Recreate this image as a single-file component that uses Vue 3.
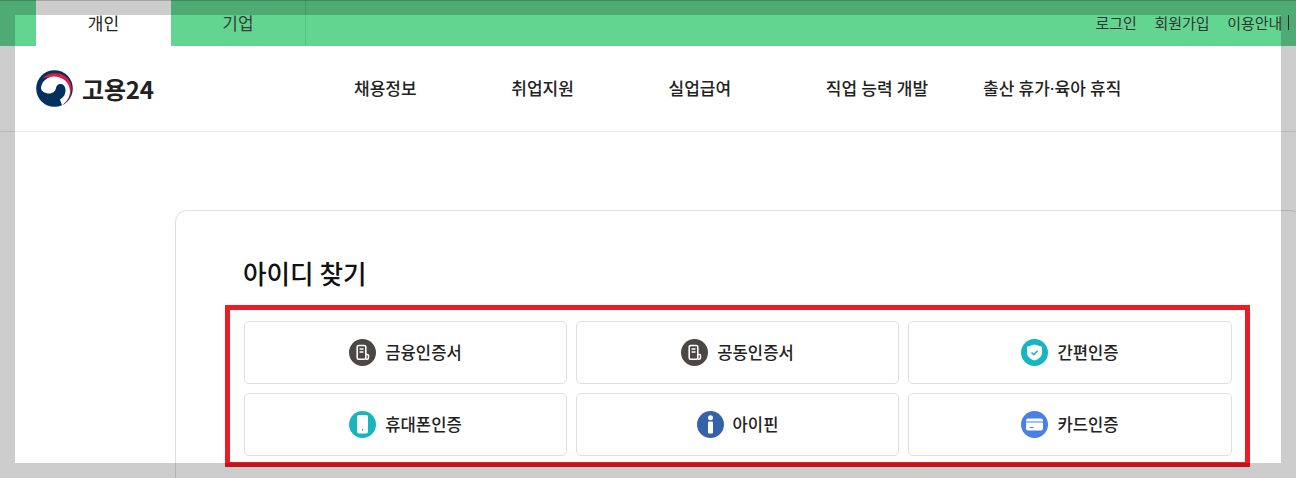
<script setup>
const topLinks = ['로그인', '회원가입', '이용안내']
const navItems = ['채용정보', '취업지원', '실업급여', '직업 능력 개발', '출산 휴가·육아 휴직']
const methods = [
  { label: '금융인증서', icon: 'cert' },
  { label: '공동인증서', icon: 'cert' },
  { label: '간편인증', icon: 'shield' },
  { label: '휴대폰인증', icon: 'phone' },
  { label: '아이핀', icon: 'info' },
  { label: '카드인증', icon: 'card' },
]
</script>

<template>
  <div class="page">
    <div class="topbar">
      <div class="tabs">
        <span class="tab active">개인</span>
        <span class="tab">기업</span>
      </div>
      <div class="links">
        <span v-for="l in topLinks" :key="l">{{ l }}</span>
        <span class="sep"></span>
      </div>
    </div>

    <header class="header">
      <div class="logo">
        <svg width="38" height="37" viewBox="0 0 38 37">
          <circle cx="18.500" cy="18.500" r="18.300" fill="#02305f" />
          <path d="M6.500 8.500C12 2.500 24 1 31 8C37.500 14.500 38 26 27 35.500C33 29 35 20 30 13C25 6.500 14 5.500 6.500 8.500Z" fill="#e8173f" />
          <path d="M5 18C5.500 11 12 6.500 18 6.500C27 6.500 34 13 34 21.500C34 27 30.500 32 26 35.500L24 29.500C28 27 29.500 24 29.500 20.500C29.500 16.500 27.500 14 24.500 14C22 14 20.500 15.500 20 18C19.500 21 17 23.500 13 23.500C9 23.500 5 21 5 18Z" fill="#fff" />
        </svg>
        <span class="logo-text">고용24</span>
      </div>
      <nav class="nav">
        <span v-for="n in navItems" :key="n">{{ n }}</span>
      </nav>
    </header>

    <section class="card">
      <h1 class="title">아이디 찾기</h1>
      <div class="grid">
        <button v-for="m in methods" :key="m.label" class="method">
          <svg class="icon" width="27" height="27" viewBox="0 0 27 27">
            <template v-if="m.icon === 'cert'">
              <circle cx="13.500" cy="13.500" r="13.500" fill="#4b4745" />
              <rect x="8.200" y="6.500" width="8.600" height="13.800" rx="1.500" fill="none" stroke="#fff" stroke-width="1.600" />
              <path d="M10.500 9.900h4M10.500 12.900h4" stroke="#fff" stroke-width="1.500" />
              <path d="M17 15.500h1.500a1 1 0 0 1 1 1v2.200a1.500 1.500 0 0 1-1.500 1.500h-1" fill="none" stroke="#fff" stroke-width="1.500" />
            </template>
            <template v-else-if="m.icon === 'shield'">
              <circle cx="13.500" cy="13.500" r="13.500" fill="#17b5bf" />
              <path d="M13.500 5.500l7.500 2.300v5.700c0 4-3.200 6.700-7.500 8-4.300-1.300-7.500-4-7.500-8V7.800z" fill="#fff" />
              <path d="M10.500 13.500l2.300 2.300 3.800-4" fill="none" stroke="#17b5bf" stroke-width="1.500" />
            </template>
            <template v-else-if="m.icon === 'phone'">
              <circle cx="13.500" cy="13.500" r="13.500" fill="#17b5bf" />
              <rect x="8" y="4" width="11" height="18.500" rx="2" fill="#fff" />
              <rect x="13" y="18" width="1.400" height="1.600" fill="#17b5bf" />
            </template>
            <template v-else-if="m.icon === 'info'">
              <circle cx="13.500" cy="13.500" r="13.500" fill="#3563ab" />
              <circle cx="13.500" cy="6.800" r="2.500" fill="#fff" />
              <rect x="11" y="10.500" width="5" height="12" rx="1" fill="#fff" />
            </template>
            <template v-else>
              <circle cx="13.500" cy="13.500" r="13.500" fill="#4a7fe8" />
              <rect x="5" y="7.500" width="17" height="12" rx="2" fill="#fff" />
              <rect x="5" y="10.500" width="17" height="1" fill="#4a7fe8" />
              <rect x="8.500" y="16" width="4" height="1" fill="#4a7fe8" />
            </template>
          </svg>
          <span class="method-label">{{ m.label }}</span>
        </button>
      </div>
      <div class="highlight"></div>
    </section>

    <div class="frame"></div>
  </div>
</template>

<style scoped>
.page {
  position: relative;
  width: 1296px;
  height: 478px;
  overflow: hidden;
  background: #fff;
  font-family: "Noto Sans CJK KR", "Noto Sans", sans-serif;
  color: #222;
}
.topbar {
  height: 46px;
  background: #62d690;
  display: flex;
  justify-content: space-between;
  padding-left: 36px;
  box-sizing: border-box;
}
.tabs {
  display: flex;
  border-right: 1px solid #58c483;
}
.tab {
  width: 134px;
  padding-top: 13px;
  box-sizing: border-box;
  text-align: center;
  font-size: 17px;
  line-height: 20px;
  color: #3c3c3c;
}
.tab.active {
  width: 135px;
  background: #fff;
  color: #222;
}
.links {
  display: flex;
  gap: 17.600px;
  padding-top: 13px;
  font-size: 15px;
  line-height: 20px;
  color: #333;
}
.links .sep {
  width: 1px;
  height: 15px;
  margin: 2px 7px 0 -12px;
  background: #333;
}
.header {
  height: 86px;
  display: flex;
  align-items: center;
  padding-left: 36px;
  border-bottom: 1px solid #e8e8e8;
  box-sizing: border-box;
}
.logo {
  width: 318px;
  display: flex;
  align-items: center;
  gap: 8px;
}
.logo-text {
  font-size: 24px;
  font-weight: 700;
  letter-spacing: -0.2px;
  color: #222;
}
.nav {
  display: grid;
  grid-template-columns: repeat(5, 157.250px);
  padding-bottom: 2px;
  white-space: nowrap;
  font-family: Roboto, "Noto Sans CJK KR", sans-serif;
  font-size: 17px;
  font-weight: 500;
  color: #222;
}
.card {
  position: relative;
  width: 1127px;
  height: 400px;
  margin: 78px 0 0 175px;
  border: 1px solid #dedede;
  border-radius: 12px;
  box-sizing: border-box;
  padding: 42px 0 0 68px;
}
.title {
  margin: 0 0 28px -1px;
  font-size: 25.600px;
  line-height: 40px;
  font-weight: 500;
  color: #111;
}
.grid {
  width: 988px;
  display: grid;
  grid-template-columns: 323px 323px 324px;
  grid-auto-rows: 63px;
  gap: 9px;
}
.method {
  display: flex;
  align-items: center;
  justify-content: center;
  gap: 9px;
  padding: 0;
  background: #fff;
  border: 1px solid #dfdfdf;
  border-radius: 5px;
  font: inherit;
  font-size: 16.600px;
  font-weight: 500;
  color: #222;
}
.method-label {
  padding-bottom: 2px;
}
.icon {
  flex: none;
}
.highlight {
  position: absolute;
  left: 49px;
  top: 94px;
  width: 1025px;
  height: 162px;
  border: 5px solid #ed1c24;
  box-sizing: border-box;
}
.frame {
  position: absolute;
  inset: 0;
  border: 15px solid rgba(0, 0, 0, 0.2);
  pointer-events: none;
}
.frame::before {
  content: "";
  position: absolute;
  left: -15px;
  right: -15px;
  top: -15px;
  height: 1px;
  background: rgba(0, 0, 0, 0.2);
}
</style>
